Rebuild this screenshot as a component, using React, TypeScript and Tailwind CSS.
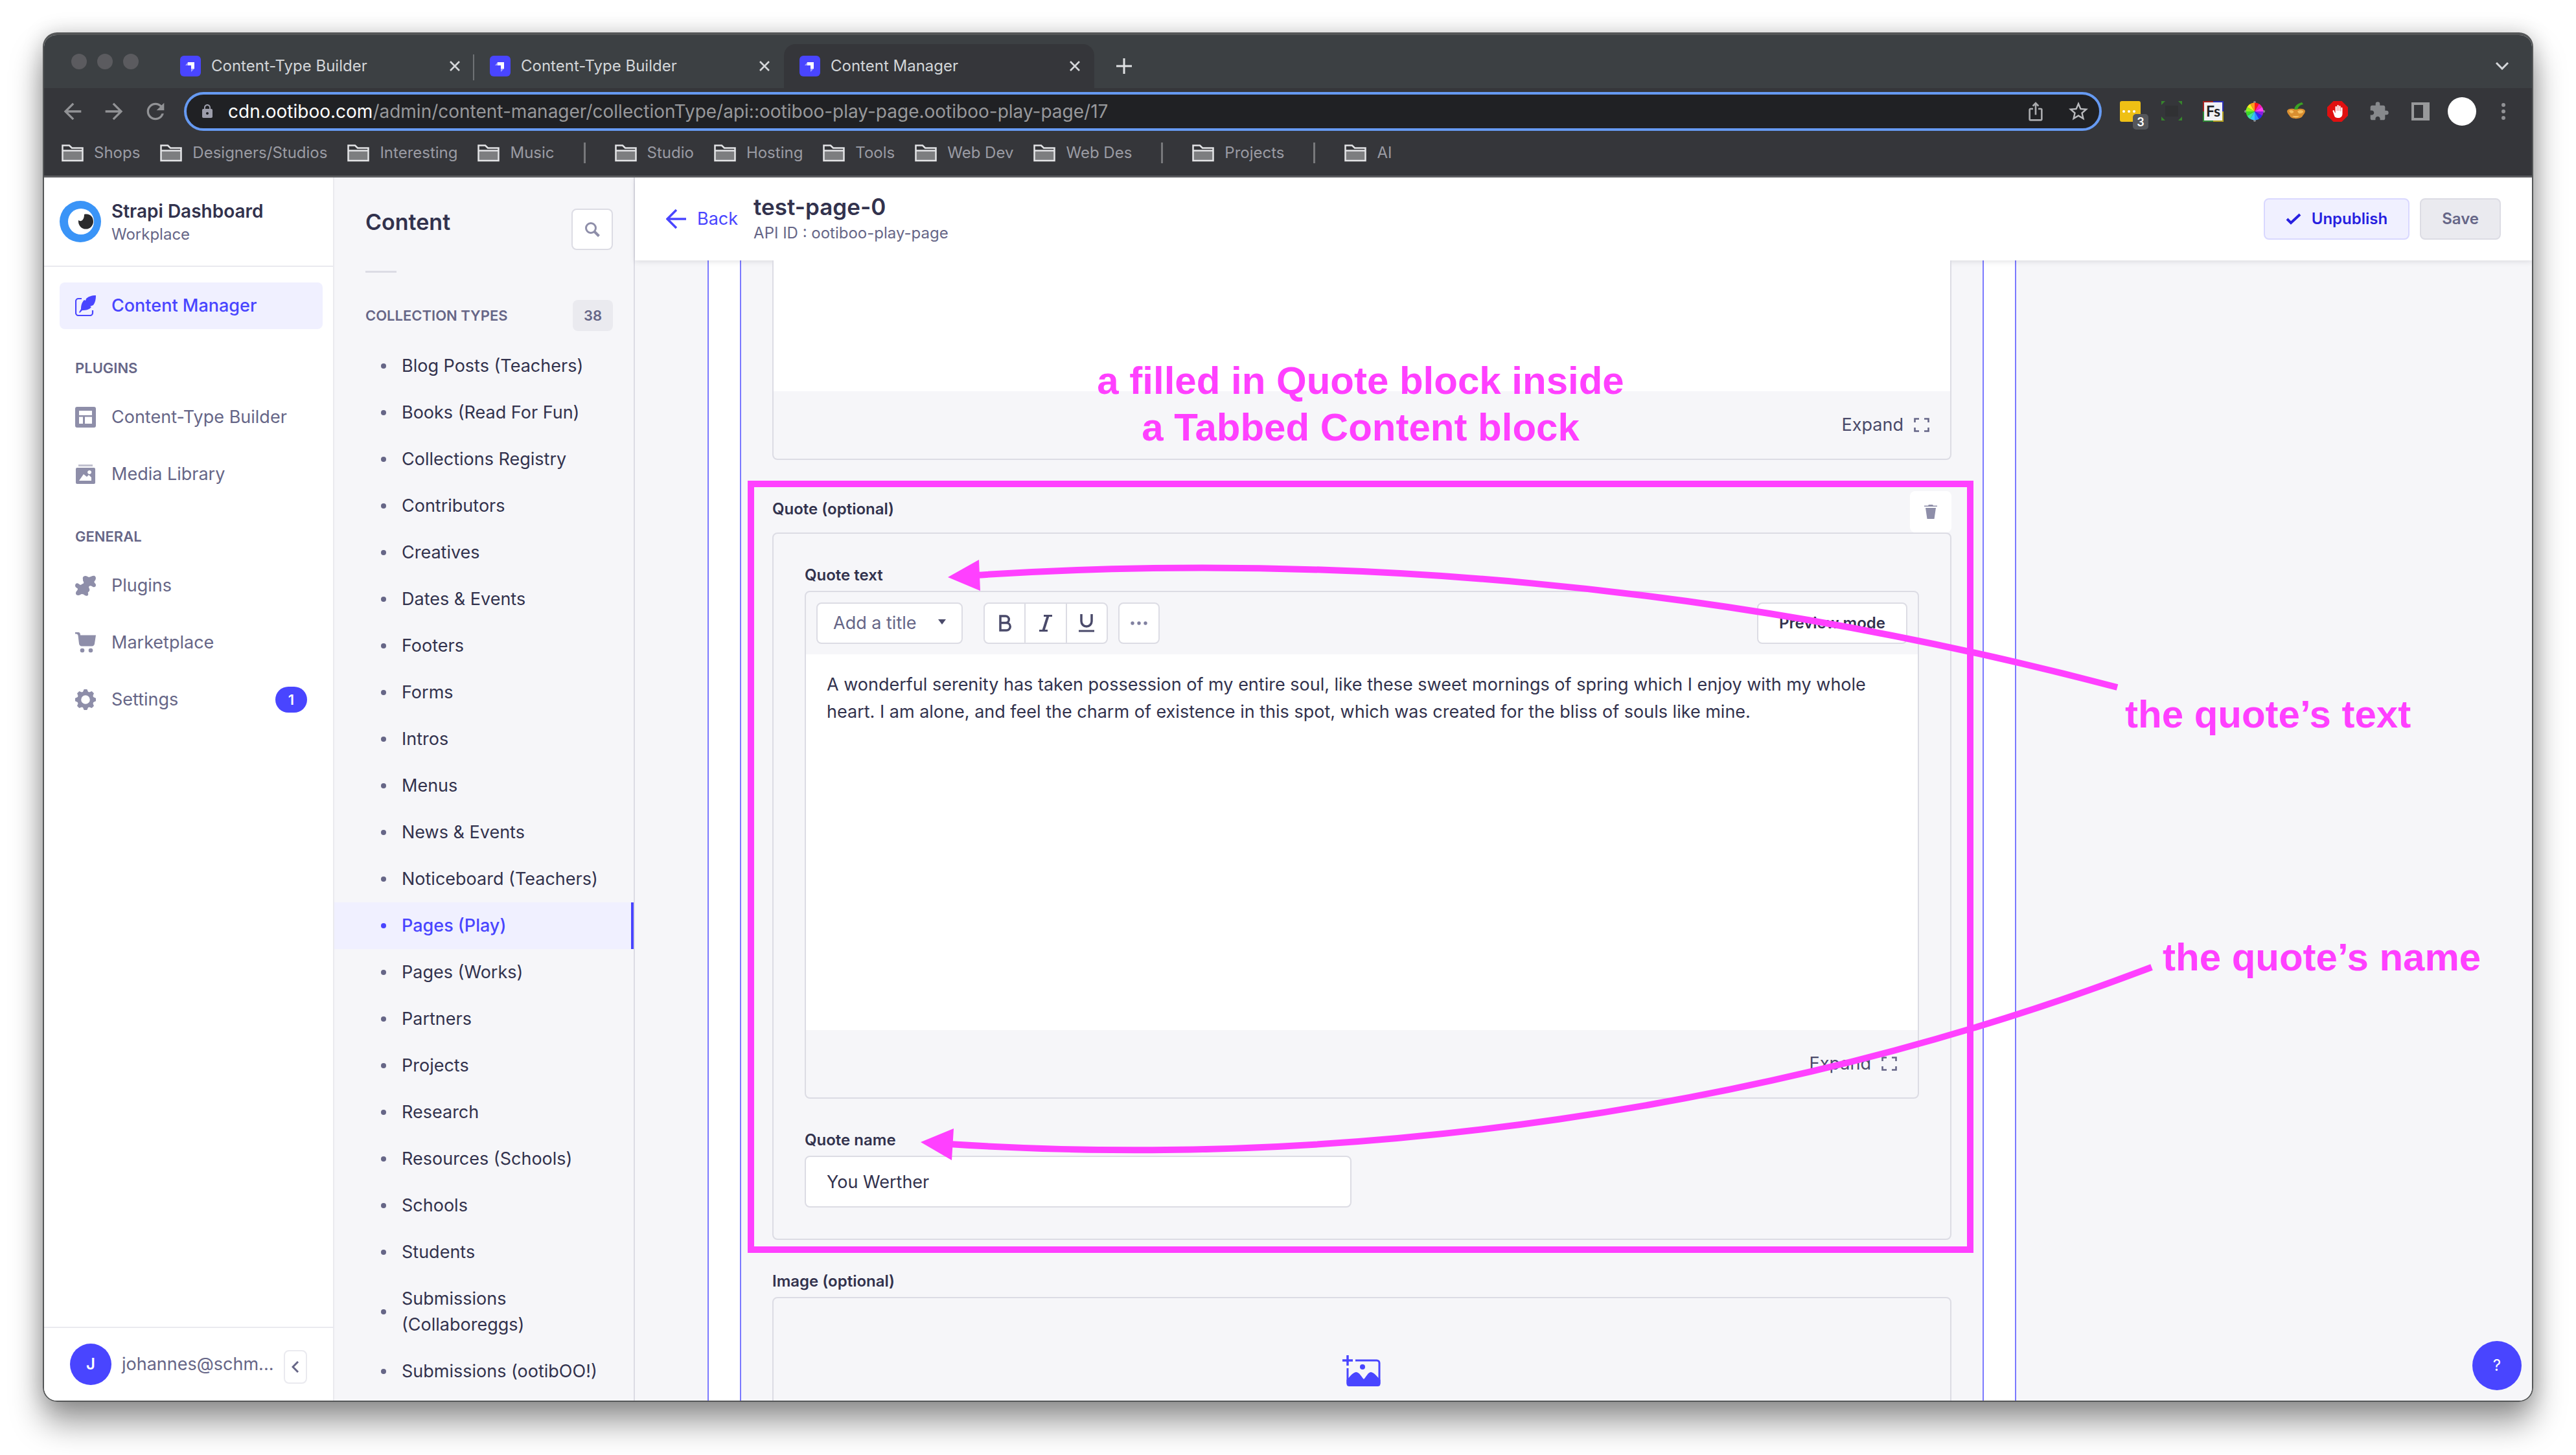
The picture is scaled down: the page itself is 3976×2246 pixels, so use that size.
import React from "react";
import { MdExtension, MdOutlineIosShare, MdStarBorder, MdArrowBack, MdArrowForward, MdRefresh, MdLock } from "react-icons/md";
import { IoHandRightSharp } from "react-icons/io5";

type IconProps = { className?: string };

/* ---------- Browser chrome drawings ---------- */

const Favicon = () => (
  <svg viewBox="0 0 32 32" className="size-8 shrink-0" aria-hidden="true">
    <rect width="32" height="32" rx="6" fill="#4945ff" />
    <path d="M12 10h10v10h-5v-5h-5z" fill="#fff" />
    <path d="M12 10v5H8zM17 20h5l-5 5z" fill="#a5a3ff" />
  </svg>
);

const Close = () => (
  <svg viewBox="0 0 18 18" className="size-[18px]" fill="none" stroke="#d5d7da" strokeWidth="2.600" aria-hidden="true">
    <path d="M2 2l14 14M16 2L2 16" />
  </svg>
);

const Folder = () => (
  <svg viewBox="0 0 34 28" className="h-7 w-[34px] shrink-0" aria-hidden="true">
    <path d="M2 10h30v15H2z" fill="#7d7e80" />
    <path d="M1.500 26V2.500h10.500l4 4h16.500V26z M1.500 10.500h31" fill="none" stroke="#e3e4e6" strokeWidth="2.500" />
  </svg>
);

const NoteExt = () => (
  <svg viewBox="0 0 56 56" className="size-14" aria-hidden="true">
    <rect x="12" y="12" width="32" height="32" rx="3" fill="#efc015" />
    <circle cx="18" cy="28" r="2" fill="#fff" />
    <circle cx="26" cy="28" r="2" fill="#fff" />
    <circle cx="34" cy="28" r="2" fill="#fff" />
    <rect x="32" y="32" width="24" height="24" rx="5" fill="#55575b" />
    <text x="44" y="51" textAnchor="middle" fontSize="18" fontWeight="600" fontFamily="Inter, sans-serif" fill="#fff">3</text>
  </svg>
);

const FrameExt = () => (
  <svg viewBox="0 0 32 32" className="size-8" aria-hidden="true">
    <path d="M0 0h6L0 6zM26 0h6v6zM0 24l6 6H0zM32 24v6h-6z" fill="#37862c" />
    <rect x="6" y="7" width="20" height="17" fill="#303133" />
  </svg>
);

const FsExt = () => (
  <svg viewBox="0 0 32 32" className="size-8" aria-hidden="true">
    <path d="M0 0h16v16H0z" fill="#a3221f" />
    <path d="M16 0h16v16H16z" fill="#2b2fb5" />
    <path d="M0 16h16v16H0z" fill="#2c8a35" />
    <path d="M16 16h16v16H16z" fill="#b5a21f" />
    <rect x="2" y="2" width="28" height="28" fill="#f2f2f5" />
    <text x="16" y="24" textAnchor="middle" fontSize="23" fontWeight="700" fontFamily="Lato, sans-serif" fill="#222">Fs</text>
  </svg>
);

const wheel = ["#ff1a1a", "#ff1fae", "#ff3df2", "#8a1fe0", "#2a2af5", "#2f8cff", "#35c8f5", "#3ee59a", "#3ddb2a", "#8cf01f", "#f5ee1f", "#ff9a1f"];

const WheelExt = () => (
  <svg viewBox="-16 -16 32 32" className="size-8" aria-hidden="true">
    <circle cx="0" cy="-14" r="2" fill="#8a8b8d" />
    <circle cx="0" cy="14" r="2" fill="#8a8b8d" />
    <circle cx="-14" cy="0" r="2" fill="#8a8b8d" />
    <circle cx="14" cy="0" r="2" fill="#8a8b8d" />
    {wheel.map((color, i) => (
      <path key={color} d="M0 0L0 -13.500A13.500 13.500 0 0 1 6.750 -11.700z" fill={color} transform={`rotate(${i * 30})`} />
    ))}
  </svg>
);

const GourdExt = () => (
  <svg viewBox="0 0 32 32" className="size-8" aria-hidden="true">
    <path d="M2 15c2-4 8-4 14-2 6-2 12-2 14 2 0 4-3 6-4 8-2 5-17 6-20 0-1-2-4-4-4-8z" fill="#d98f30" />
    <path d="M5 15c3-2 6-1 7 1s-3 4-5 2zM18 16c3-3 8-2 9 0s-5 4-7 3zM10 23c3 3 8 3 11 0" fill="#f5c063" />
    <path d="M13 13c1-6 5-9 12-11l2 3c-5 1-7 3-9 8z" fill="#3aa323" />
  </svg>
);

const StopExt = () => (
  <span className="grid size-8 place-items-center bg-[#e01010] [clip-path:polygon(30%_0,70%_0,100%_30%,100%_70%,70%_100%,30%_100%,0_70%,0_30%)]">
    <IoHandRightSharp className="size-5 text-white" />
  </span>
);

const PanelExt = () => (
  <svg viewBox="0 0 28 28" className="size-7" aria-hidden="true">
    <path fillRule="evenodd" d="M0 0h28v28H0zM4 4v20h14V4z" fill="#98999b" />
  </svg>
);

/* ---------- Admin drawings ---------- */

const Feather = ({ className }: IconProps) => (
  <svg viewBox="0 0 32 32" className={className} aria-hidden="true">
    <path d="M10 5H5a4 4 0 0 0-4 4v18a4 4 0 0 0 4 4h18a4 4 0 0 0 4-4v-4" fill="none" stroke="currentColor" strokeWidth="2.200" />
    <path d="M32 0c-7 0-12 2-15 5l-1 3-2-1c-4 4-5 9-5 14l-3 5 1 1 4-4c6 0 11-1 14-5l-2-1 5-2c3-4 4-9 4-15z" fill="currentColor" />
  </svg>
);

const Layout = ({ className }: IconProps) => (
  <svg viewBox="0 0 32 32" className={className} aria-hidden="true">
    <path fillRule="evenodd" fill="currentColor" d="M3 0h26a3 3 0 0 1 3 3v26a3 3 0 0 1-3 3H3a3 3 0 0 1-3-3V3a3 3 0 0 1 3-3zM6 6v7h20V6zM6 15.500V26h6V15.500zM15 15.500V26h11V15.500z" />
  </svg>
);

const Media = ({ className }: IconProps) => (
  <svg viewBox="0 0 32 32" className={className} aria-hidden="true">
    <path d="M5 1h22v3H5z" fill="#c0c0cf" />
    <path fillRule="evenodd" fill="currentColor" d="M3 6h26a2 2 0 0 1 2 2v21a2 2 0 0 1-2 2H3a2 2 0 0 1-2-2V8a2 2 0 0 1 2-2zM6 26h19v-5l-4-4-3 3-5-4zM22 10a3 3 0 1 0 0.100 0z" />
  </svg>
);

const Puzzle = ({ className }: IconProps) => (
  <svg viewBox="0 0 32 32" className={className} aria-hidden="true">
    <path fill="currentColor" d="M12 6c-1-3 1-5 4-5 2 0 3 1 5 2 3 0 6-3 9-2 3 2 2 6 0 8-2 3 2 3 2 6 0 4-4 4-6 2-2-1-4-1-5 1 0 2 2 3 1 6-1 2-3 2-2 4 1 3-2 5-5 3-2-2-5-3-7-1-3 2-7 1-7-2 0-4 3-4 3-7 0-1-4-2-4-5s3-5 5-3c2 1 3 3 5 1 2-1 4-1 3-4-1-1-1-2-1-4z" />
  </svg>
);

const Cart = ({ className }: IconProps) => (
  <svg viewBox="0 0 32 32" className={className} aria-hidden="true">
    <path fill="currentColor" d="M0 0h5c2 0 3 2 3 4.500h24l-2 13c0 2-2 4-4 4H10c-2 0-4-2-4-4L4.500 5C4 3 3 2.500 0 2.500z" />
    <circle cx="11" cy="28" r="3.300" fill="currentColor" />
    <circle cx="24" cy="28" r="3.300" fill="currentColor" />
  </svg>
);

const Gear = ({ className }: IconProps) => (
  <svg viewBox="-16 -16 32 32" className={className} aria-hidden="true">
    <circle r="9.800" fill="none" stroke="currentColor" strokeWidth="6" />
    {[0, 45, 90, 135, 180, 225, 270, 315].map((a) => (
      <path key={a} d="M-4.500 -11L-2.300 -16h4.600L4.500 -11z" fill="currentColor" transform={`rotate(${a})`} />
    ))}
  </svg>
);

const Eye = () => (
  <svg viewBox="0 0 64 64" className="size-16 shrink-0" aria-hidden="true">
    <circle cx="32" cy="32" r="32" fill="#3a94f7" />
    <circle cx="33" cy="32" r="20" fill="#fff" />
    <path d="M29 30c4 3 9 0 9-9 9-2 14 4 14 11a11.500 11.500 0 0 1-23 0z" fill="#2b2b2d" />
  </svg>
);

const ExpandIcon = () => (
  <svg viewBox="0 0 24 24" className="h-6 w-6" fill="none" stroke="#666687" strokeWidth="2.600" aria-hidden="true">
    <path d="M1.500 8V2.500H8M16 2.500h6.500V8M22.500 16v5.500H16M8 21.500H1.500V16" />
  </svg>
);

const Trash = () => (
  <svg viewBox="0 0 20 22" className="h-[22px] w-5" fill="#8e8ea9" aria-hidden="true">
    <path d="M0 1.500h6L7 0h6l1 1.500h6V3H0zM2 5h16l-2.500 17h-11z" />
  </svg>
);

const AddImage = () => (
  <svg viewBox="0 0 60 48" className="h-12 w-[60px]" aria-hidden="true">
    <path d="M8 0v16M0 8h16" stroke="#4945ff" strokeWidth="3.500" />
    <path d="M20 8h33a4 4 0 0 1 4 4v32M8 20v24" fill="none" stroke="#4945ff" strokeWidth="3" />
    <circle cx="31" cy="18" r="4" fill="#4945ff" />
    <path d="M6.500 38c4-3 8-11 14.500-12 6 1 8 7 12 11 4-4 6-10 11-11 6 1 10 8 14.500 12v6a4 4 0 0 1-4 4h-44a4 4 0 0 1-4-4z" fill="#4945ff" />
  </svg>
);

/* ---------- Browser ---------- */

const Tab = ({ title, active, divided }: { title: string; active?: boolean; divided?: boolean }) => (
  <div className={active ? "relative flex h-[68px] w-[479px] items-center rounded-t-[18px] bg-[#35363a] pl-6 pr-[18px]" : "relative flex h-[68px] w-[478px] items-center pl-6 pr-[18px]"}>
    <Favicon />
    <span className="ml-4 flex-1 text-[24px] leading-8 text-[#d3d6d9]">{title}</span>
    <button type="button" aria-label="Close tab" className="grid size-6 place-items-center"><Close /></button>
    {divided && <span className="absolute right-0 top-4 h-10 w-[2px] bg-[#6e7174]" />}
  </div>
);

const Bookmark = ({ name }: { name: string }) => (
  <a href="#" className="flex items-center gap-4 whitespace-nowrap text-[24px] leading-8 text-[#9a9ba3]">
    <Folder />
    {name}
  </a>
);

const Divider = () => <span className="mx-[14px] h-8 w-[3px] bg-[#77787b]" />;

const Chrome = () => (
  <header>
    <div className="flex h-[82px] items-end bg-[#3c4043]">
      <div className="flex gap-4 self-center pl-[42px]">
        <span className="size-6 rounded-full bg-[#5b5b5f]" />
        <span className="size-6 rounded-full bg-[#5b5b5f]" />
        <span className="size-6 rounded-full bg-[#5b5b5f]" />
      </div>
      <div className="ml-[40px] flex">
        <Tab title="Content-Type Builder" divided />
        <Tab title="Content-Type Builder" />
        <Tab title="Content Manager" active />
      </div>
      <button type="button" aria-label="New tab" className="ml-8 grid h-[68px] w-7 place-items-center">
        <svg viewBox="0 0 24 24" className="size-6" stroke="#e0e2e4" strokeWidth="3"><path d="M12 0v24M0 12h24" /></svg>
      </button>
      <button type="button" aria-label="Search tabs" className="ml-auto mr-9 grid h-[68px] w-5 place-items-center">
        <svg viewBox="0 0 20 12" className="h-3 w-5" fill="none" stroke="#d5d7da" strokeWidth="3"><path d="M1 1l9 9 9-9" /></svg>
      </button>
    </div>

    <div className="flex h-[72px] items-center bg-[#35363a] pl-6">
      <div className="flex gap-6 text-[#929396]">
        <button type="button" aria-label="Back"><MdArrowBack className="size-10" /></button>
        <button type="button" aria-label="Forward"><MdArrowForward className="size-10" /></button>
        <button type="button" aria-label="Reload"><MdRefresh className="size-10" /></button>
      </div>
      <label className="ml-6 flex h-[60px] flex-1 items-center rounded-full border-4 border-[#669af2] bg-[#202124] pl-5 pr-[14px] text-[28px]">
        <MdLock className="mr-5 size-6 shrink-0 text-[#9d9eab]" />
        <span className="text-white">cdn.ootiboo.com</span>
        <input aria-label="Address" readOnly className="min-w-0 flex-1 bg-transparent text-[#97989b] outline-none" value="/admin/content-manager/collectionType/api::ootiboo-play-page.ootiboo-play-page/17" />
        <MdOutlineIosShare className="mr-8 size-8 text-[#a9aaad]" />
        <MdStarBorder className="size-9 text-[#b9babd]" />
      </label>
      <div className="flex items-center pl-3">
        {[NoteExt, FrameExt, FsExt, WheelExt, GourdExt, StopExt].map((Ext, i) => (
          <button type="button" aria-label={`Extension ${i + 1}`} key={i} className="grid w-16 place-items-center"><Ext /></button>
        ))}
        <button type="button" aria-label="Extensions" className="grid w-16 place-items-center"><MdExtension className="size-8 text-[#87898c]" /></button>
        <button type="button" aria-label="Side panel" className="grid w-16 place-items-center"><PanelExt /></button>
        <button type="button" aria-label="Profile" className="grid w-16 place-items-center"><span className="size-11 rounded-full bg-white" /></button>
        <button type="button" aria-label="Menu" className="grid w-16 place-items-center">
          <svg viewBox="0 0 6 26" className="h-[26px] w-[6px]" fill="#919295"><circle cx="3" cy="3" r="3" /><circle cx="3" cy="13" r="3" /><circle cx="3" cy="23" r="3" /></svg>
        </button>
        <span className="w-3" />
      </div>
    </div>

    <nav aria-label="Bookmarks" className="flex h-[66px] items-center gap-[31px] border-b-[3px] border-[#5d5e61] bg-[#35363a] pb-2 pl-[27px]">
      <Bookmark name="Shops" />
      <Bookmark name="Designers/Studios" />
      <Bookmark name="Interesting" />
      <Bookmark name="Music" />
      <Divider />
      <Bookmark name="Studio" />
      <Bookmark name="Hosting" />
      <Bookmark name="Tools" />
      <Bookmark name="Web Dev" />
      <Bookmark name="Web Des" />
      <Divider />
      <Bookmark name="Projects" />
      <Divider />
      <Bookmark name="AI" />
    </nav>
  </header>
);

/* ---------- Admin navigation ---------- */

const NavItem = ({ icon: Icon, label, active, badge }: { icon: React.FC<IconProps>; label: string; active?: boolean; badge?: string }) => (
  <a
    href="#"
    className={
      active
        ? "flex h-[72px] items-center gap-6 rounded-lg bg-[#f0f0ff] px-6 text-[27px] font-medium text-[#4945ff]"
        : "flex h-[72px] items-center gap-6 rounded-lg px-6 text-[27px] text-[#666687]"
    }
  >
    <Icon className={active ? "size-8" : "size-8 text-[#8e8ea9]"} />
    {label}
    {badge && <span className="ml-auto grid h-10 w-[49px] place-items-center rounded-[20px] bg-[#4945ff] text-[22px] font-semibold text-white">{badge}</span>}
  </a>
);

const NavHeading = ({ children }: { children: string }) => (
  <h2 className="mb-6 mt-11 px-6 text-[22px] font-semibold leading-8 text-[#666687]">{children}</h2>
);

const SideNav = () => (
  <aside className="flex w-[448px] shrink-0 flex-col border-r-2 border-[#eaeaef] bg-white">
    <div className="flex h-[138px] items-center gap-4 border-b-2 border-[#eaeaef] pl-6">
      <Eye />
      <div className="pt-1">
        <p className="text-[28px] font-semibold leading-9 text-[#32324d]">Strapi Dashboard</p>
        <p className="text-[24px] leading-9 text-[#666687]">Workplace</p>
      </div>
    </div>
    <nav aria-label="Main" className="flex-1 pl-6 pr-4 pt-6">
      <NavItem icon={Feather} label="Content Manager" active />
      <NavHeading>PLUGINS</NavHeading>
      <div className="flex flex-col gap-4">
        <NavItem icon={Layout} label="Content-Type Builder" />
        <NavItem icon={Media} label="Media Library" />
      </div>
      <NavHeading>GENERAL</NavHeading>
      <div className="flex flex-col gap-4">
        <NavItem icon={Puzzle} label="Plugins" />
        <NavItem icon={Cart} label="Marketplace" />
        <NavItem icon={Gear} label="Settings" badge="1" />
      </div>
    </nav>
    <div className="flex h-[114px] items-center border-t-2 border-[#eaeaef] pl-10 pr-10">
      <span className="grid size-16 place-items-center rounded-full bg-[#4945ff] text-[24px] font-semibold text-white">J</span>
      <span className="ml-4 flex-1 text-[27px] text-[#666687]">johannes@schm...</span>
      <button type="button" aria-label="Collapse navigation" className="mt-2 grid h-[52px] w-9 shrink-0 place-items-center rounded-lg border-2 border-[#eaeaef]">
        <svg viewBox="0 0 12 18" className="h-[18px] w-3" fill="none" stroke="#666687" strokeWidth="3"><path d="M10 1L2 9l8 8" /></svg>
      </button>
    </div>
  </aside>
);

const types = [
  "Blog Posts (Teachers)", "Books (Read For Fun)", "Collections Registry", "Contributors", "Creatives", "Dates & Events",
  "Footers", "Forms", "Intros", "Menus", "News & Events", "Noticeboard (Teachers)", "Pages (Play)", "Pages (Works)",
  "Partners", "Projects", "Research", "Resources (Schools)", "Schools", "Students", "Submissions (Collaboreggs)", "Submissions (ootibOO!)",
];

const SubNav = () => (
  <aside className="w-[464px] shrink-0 overflow-hidden border-r-2 border-[#dcdce4] bg-[#f6f6f9]">
    <div className="flex justify-between pl-12 pr-8 pt-12">
      <h1 className="text-[34px] font-semibold leading-[42px] text-[#32324d]">Content</h1>
      <button type="button" aria-label="Search" className="grid size-16 place-items-center rounded-lg border-2 border-[#dcdce4] bg-white">
        <svg viewBox="0 0 24 24" className="size-6" fill="none" stroke="#8e8ea9"><circle cx="10" cy="10" r="7.500" strokeWidth="3" /><path d="M15.500 15.500l7 7" strokeWidth="4" /></svg>
      </button>
    </div>
    <div className="ml-12 mt-8 h-[3px] w-12 bg-[#dcdce4]" />
    <div className="mt-[42px] flex items-center justify-between pl-12 pr-8">
      <h2 className="text-[22px] font-semibold leading-8 text-[#666687]">COLLECTION TYPES</h2>
      <span className="grid h-12 w-[62px] place-items-center rounded-lg bg-[#eaeaef] text-[22px] font-semibold text-[#666687]">38</span>
    </div>
    <ul className="mt-[18px]">
      {types.map((t) => {
        const active = t === "Pages (Play)";
        return (
          <li key={t}>
            <a
              href="#"
              className={
                active
                  ? "flex items-center gap-6 border-r-4 border-[#4945ff] bg-[#f0f0ff] py-4 pl-[72px] pr-8 text-[27px] font-medium leading-10 text-[#4945ff]"
                  : "flex items-center gap-6 border-r-4 border-transparent py-4 pl-[72px] pr-8 text-[27px] leading-10 text-[#32324d]"
              }
            >
              <span className={active ? "size-2 shrink-0 rounded-full bg-[#4945ff]" : "size-2 shrink-0 rounded-full bg-[#666687]"} />
              {t}
            </a>
          </li>
        );
      })}
    </ul>
  </aside>
);

/* ---------- Edit view ---------- */

const EditorFooter = () => (
  <div className="flex h-[104px] items-center justify-end pr-8">
    <button type="button" className="flex items-center gap-4 text-[27px] text-[#4a4a6a]">
      Expand <ExpandIcon />
    </button>
  </div>
);

const fieldLabel = "block text-[24px] font-semibold leading-8 text-[#32324d]";

const QuoteEditor = () => (
  <div>
    <label htmlFor="quote-text" className={fieldLabel}>Quote text</label>
    <div className="mt-2 rounded-lg border-2 border-[#dcdce4]">
      <div className="flex h-24 items-center px-4">
        <div className="relative">
          <select aria-label="Add a title" className="h-16 w-[226px] appearance-none rounded-lg border-2 border-[#dcdce4] bg-white pl-6 text-[27px] text-[#666687]">
            <option>Add a title</option>
          </select>
          <svg viewBox="0 0 12 8" className="pointer-events-none absolute right-[26px] top-[26px] h-2 w-3" fill="#4a4a6a"><path d="M0 0h12L6 8z" /></svg>
        </div>
        <div className="ml-8 flex h-16 w-[192px] divide-x-2 divide-[#dcdce4] rounded-lg border-2 border-[#dcdce4] bg-white">
          <button type="button" aria-label="Bold" className="grid flex-1 place-items-center">
            <svg viewBox="0 0 22 26" className="h-[26px] w-[22px]" fill="none" stroke="#4a4a6a" strokeWidth="3.500"><path d="M4 2h8a5 5 0 0 1 0 10.500H4zM4 12.500h9.500a5.700 5.700 0 0 1 0 11.500H4z" /></svg>
          </button>
          <button type="button" aria-label="Italic" className="grid flex-1 place-items-center">
            <svg viewBox="0 0 22 26" className="h-[26px] w-[22px]" fill="none" stroke="#4a4a6a" strokeWidth="3"><path d="M8 1.500h13M1 24.500h13" /><path d="M14.500 2L7.500 24" strokeWidth="4" /></svg>
          </button>
          <button type="button" aria-label="Underline" className="grid flex-1 place-items-center">
            <svg viewBox="0 0 24 28" className="h-7 w-6" fill="none" stroke="#4a4a6a" strokeWidth="3.500"><path d="M4 0v11a7.500 7.500 0 0 0 16 0V0" /><path d="M0 26h24" strokeWidth="3" /></svg>
          </button>
        </div>
        <button type="button" aria-label="More" className="ml-4 grid h-16 w-16 place-items-center rounded-lg border-2 border-[#dcdce4] bg-white">
          <svg viewBox="0 0 28 8" className="h-2 w-7" fill="#8080a0"><circle cx="4" cy="4" r="2.700" /><circle cx="14" cy="4" r="2.700" /><circle cx="24" cy="4" r="2.700" /></svg>
        </button>
        <button type="button" className="ml-auto h-16 rounded-lg border-2 border-[#dcdce4] bg-white px-8 text-[24px] font-semibold text-[#32324d]">Preview mode</button>
      </div>
      <textarea
        id="quote-text"
        readOnly
        className="block h-[580px] w-full resize-none overflow-hidden bg-white px-8 pt-[26px] text-[27px] leading-[42px] text-[#32324d] outline-none"
        defaultValue="A wonderful serenity has taken possession of my entire soul, like these sweet mornings of spring which I enjoy with my whole heart. I am alone, and feel the charm of existence in this spot, which was created for the bliss of souls like mine."
      />
      <EditorFooter />
    </div>
  </div>
);

const EditView = () => (
  <main className="relative flex min-w-0 flex-1 flex-col bg-[#f6f6f9]">
    <div className="relative flex h-32 shrink-0 items-center bg-white pl-12 pr-12 shadow-[0_2px_8px_rgba(33,33,52,0.12)]">
      <a href="#" className="flex items-center gap-4 text-[27px] text-[#4945ff]">
        <svg viewBox="0 0 32 32" className="size-8" fill="none" stroke="#4945ff" strokeWidth="3.500"><path d="M31 16H3M16 2L2 16l14 14" /></svg>
        Back
      </a>
      <div className="ml-6 pt-[2px]">
        <h2 className="text-[35px] font-semibold leading-[42px] text-[#32324d]">test-page-0</h2>
        <p className="text-[24px] leading-10 text-[#666687]">API ID : ootiboo-play-page</p>
      </div>
      <button type="button" className="ml-auto flex h-16 items-center gap-4 rounded-lg border-2 border-[#d9d8ff] bg-[#f0f0ff] px-8 text-[24px] font-semibold text-[#271fe0]">
        <svg viewBox="0 0 24 18" className="h-[18px] w-6" fill="none" stroke="#271fe0" strokeWidth="4"><path d="M2 9l6 6L22 2" /></svg>
        Unpublish
      </button>
      <button type="button" disabled className="ml-4 h-16 rounded-lg border-2 border-[#dcdce4] bg-[#eaeaef] px-8 text-[24px] font-semibold text-[#666687]">Save</button>
    </div>

    <div className="ml-28 mr-[796px] min-h-0 flex-1 overflow-hidden border-x-2 border-[#7b79ff] bg-white px-12">
      <div className="min-h-full border-x-2 border-[#7b79ff] bg-[#f6f6f9] px-12">
        <section className="relative rounded-b-lg border-x-2 border-b-2 border-[#dcdce4]">
          <div className="h-[202px] bg-white" />
          <EditorFooter />
          <p className="absolute inset-x-0 top-[150px] pr-1 text-center font-['Liberation_Sans',Arial,sans-serif] text-[60px] font-bold leading-[72px] text-[#ff40ff]">
            a filled in Quote block inside
            <br />a Tabbed Content block
          </p>
        </section>

        <section className="relative mt-12">
          <div className="flex justify-between">
            <h3 className="pt-3 text-[24px] font-semibold leading-8 text-[#32324d]">Quote (optional)</h3>
            <button type="button" aria-label="Delete quote" className="grid size-16 place-items-center rounded-lg bg-white"><Trash /></button>
          </div>
          <div className="flex flex-col gap-12 rounded-lg border-2 border-[#dcdce4] p-12">
            <QuoteEditor />
            <div className="grid grid-cols-2 gap-8">
              <div>
                <label htmlFor="quote-name" className={fieldLabel}>Quote name</label>
                <input id="quote-name" defaultValue="You Werther" className="mt-2 h-20 w-full rounded-lg border-2 border-[#dcdce4] bg-white px-8 text-[27px] text-[#32324d] outline-none" />
              </div>
            </div>
          </div>
          <div className="pointer-events-none absolute -bottom-5 -left-[38px] -right-[34px] -top-4 border-[10px] border-[#ff40ff]" />
        </section>

        <section className="mt-12">
          <h3 className={fieldLabel}>Image (optional)</h3>
          <div className="mt-2 flex h-80 justify-center rounded-lg border-2 border-[#dcdce4] pt-[88px]"><AddImage /></div>
        </section>
      </div>
    </div>

    <button type="button" aria-label="Help" className="absolute bottom-4 right-4 grid size-[76px] place-items-center rounded-full bg-[#4945ff] text-[24px] text-white">?</button>
  </main>
);

/* ---------- Annotations drawn over the window ---------- */

const Arrows = () => (
  <svg viewBox="0 0 3976 2246" className="pointer-events-none absolute inset-0 h-full w-full" aria-hidden="true">
    <g fill="none" stroke="#ff40ff" strokeWidth="10">
      <path d="M1505 888C2050 852 2650 898 3268 1061" />
      <path d="M1465 1766C2080 1806 2740 1715 3321 1493" />
    </g>
    <path d="M1463 891L1511 864L1513 912zM1421 1763L1472 1742L1469 1791z" fill="#ff40ff" />
  </svg>
);

export default function App() {
  return (
    <div className="relative flex h-screen flex-col overflow-hidden bg-white px-[66px] pb-[82px] pt-[50px] font-[Inter,'Noto_Sans',sans-serif]">
      <div className="flex min-h-0 flex-1 flex-col overflow-hidden rounded-[22px] border-x-2 border-b-2 border-t-4 border-[#545657] shadow-[0_32px_50px_rgba(0,0,0,0.4),0_0_32px_rgba(0,0,0,0.18)]">
        <Chrome />
        <div className="flex min-h-0 flex-1">
          <SideNav />
          <SubNav />
          <EditView />
        </div>
      </div>
      <Arrows />
      <p className="absolute left-[3280px] top-[1067px] font-['Liberation_Sans',Arial,sans-serif] text-[60px] font-bold leading-[72px] text-[#ff40ff]">the quote’s text</p>
      <p className="absolute left-[3338px] top-[1442px] font-['Liberation_Sans',Arial,sans-serif] text-[60px] font-bold leading-[72px] text-[#ff40ff]">the quote’s name</p>
    </div>
  );
}
